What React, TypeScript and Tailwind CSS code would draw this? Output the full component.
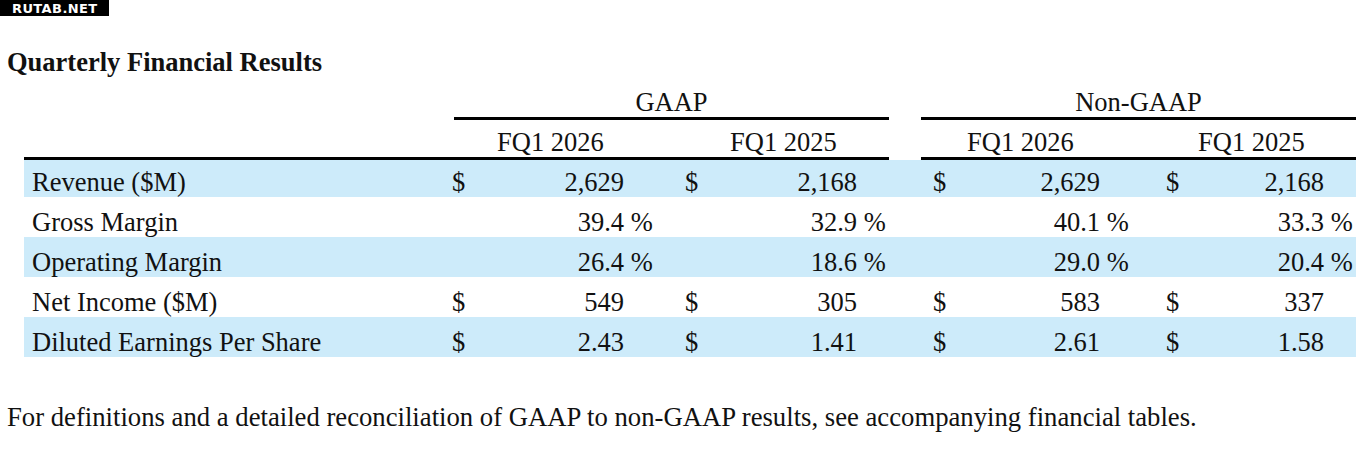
import React from "react";

type Row = {
  label: string;
  blue: boolean;
  cells: { dollar: boolean; value: string; pct: boolean }[];
};

const rows: Row[] = [
  {
    label: "Revenue ($M)",
    blue: true,
    cells: [
      { dollar: true, value: "2,629", pct: false },
      { dollar: true, value: "2,168", pct: false },
      { dollar: true, value: "2,629", pct: false },
      { dollar: true, value: "2,168", pct: false },
    ],
  },
  {
    label: "Gross Margin",
    blue: false,
    cells: [
      { dollar: false, value: "39.4", pct: true },
      { dollar: false, value: "32.9", pct: true },
      { dollar: false, value: "40.1", pct: true },
      { dollar: false, value: "33.3", pct: true },
    ],
  },
  {
    label: "Operating Margin",
    blue: true,
    cells: [
      { dollar: false, value: "26.4", pct: true },
      { dollar: false, value: "18.6", pct: true },
      { dollar: false, value: "29.0", pct: true },
      { dollar: false, value: "20.4", pct: true },
    ],
  },
  {
    label: "Net Income ($M)",
    blue: false,
    cells: [
      { dollar: true, value: "549", pct: false },
      { dollar: true, value: "305", pct: false },
      { dollar: true, value: "583", pct: false },
      { dollar: true, value: "337", pct: false },
    ],
  },
  {
    label: "Diluted Earnings Per Share",
    blue: true,
    cells: [
      { dollar: true, value: "2.43", pct: false },
      { dollar: true, value: "1.41", pct: false },
      { dollar: true, value: "2.61", pct: false },
      { dollar: true, value: "1.58", pct: false },
    ],
  },
];

// widths: [$ col, value col, % col] per group
const colW = [
  ["w-[88px]", "w-[84px]", "w-[61px]"],
  ["w-[75px]", "w-[97px]", "w-[76px]"],
  ["w-[77px]", "w-[90px]", "w-[66px]"],
  ["w-[74px]", "w-[84px]", "w-[32px]"],
];

export default function App() {
  return (
    <div
      className="w-[1363px] h-[450px] bg-white text-[#111] overflow-hidden"
      style={{ fontFamily: '"Liberation Serif", "Times New Roman", serif' }}
    >
      <div className="h-[16px] w-[109px] bg-black flex items-center pl-[12px]">
        <span
          className="text-white font-bold text-[13px] leading-none tracking-[0.4px]"
          style={{ fontFamily: '"DejaVu Sans", Verdana, sans-serif' }}
        >
          RUTAB.NET
        </span>
      </div>

      <div className="mt-[32px] pl-[7px] text-[26.5px] leading-[29px] font-bold">
        Quarterly Financial Results
      </div>

      <div className="pl-[24px] text-[26.5px] leading-[29px]">
        {/* header row 1 */}
        <div className="flex h-[43px]">
          <div className="w-[430px]" />
          <div className="w-[435px] h-[43px] border-b-[3px] border-black flex items-end justify-center">
            <span>GAAP</span>
          </div>
          <div className="w-[32px]" />
          <div className="w-[435px] h-[43px] border-b-[3px] border-black flex items-end justify-center">
            <span>Non-GAAP</span>
          </div>
        </div>
        {/* header row 2 */}
        <div className="flex h-[40px]">
          <div className="w-[865px] h-[40px] border-b-[3px] border-black flex items-end">
            <div className="w-[430px]" />
            <div className="w-[233px] pl-[43px]">FQ1 2026</div>
            <div className="w-[202px] pl-[43px]">FQ1 2025</div>
          </div>
          <div className="w-[32px]" />
          <div className="w-[435px] h-[40px] border-b-[3px] border-black flex items-end">
            <div className="w-[231px] pl-[46px]">FQ1 2026</div>
            <div className="w-[204px] pl-[46px]">FQ1 2025</div>
          </div>
        </div>

        {/* data rows */}
        {rows.map((r, i) => (
          <div
            key={r.label}
            className={`flex items-end w-[1332px] ${i === 0 ? "h-[37px]" : "h-[40px]"} ${
              r.blue ? "bg-[#cdebfa]" : "bg-white"
            }`}
          >
            <div className="w-[428px] pl-[8px] whitespace-nowrap">{r.label}</div>
            {r.cells.map((c, j) => (
              <React.Fragment key={j}>
                <div className={`${colW[j][0]} text-left`}>{c.dollar ? "$" : ""}</div>
                <div className={`${colW[j][1]} text-right`}>{c.value}</div>
                <div className={`${colW[j][2]} text-left whitespace-pre`}>{c.pct ? " %" : ""}</div>
              </React.Fragment>
            ))}
          </div>
        ))}
      </div>

      <div className="mt-[46px] pl-[7px] text-[26.7px] leading-[29px] whitespace-nowrap">
        For definitions and a detailed reconciliation of GAAP to non-GAAP results, see accompanying financial tables.
      </div>
    </div>
  );
}
